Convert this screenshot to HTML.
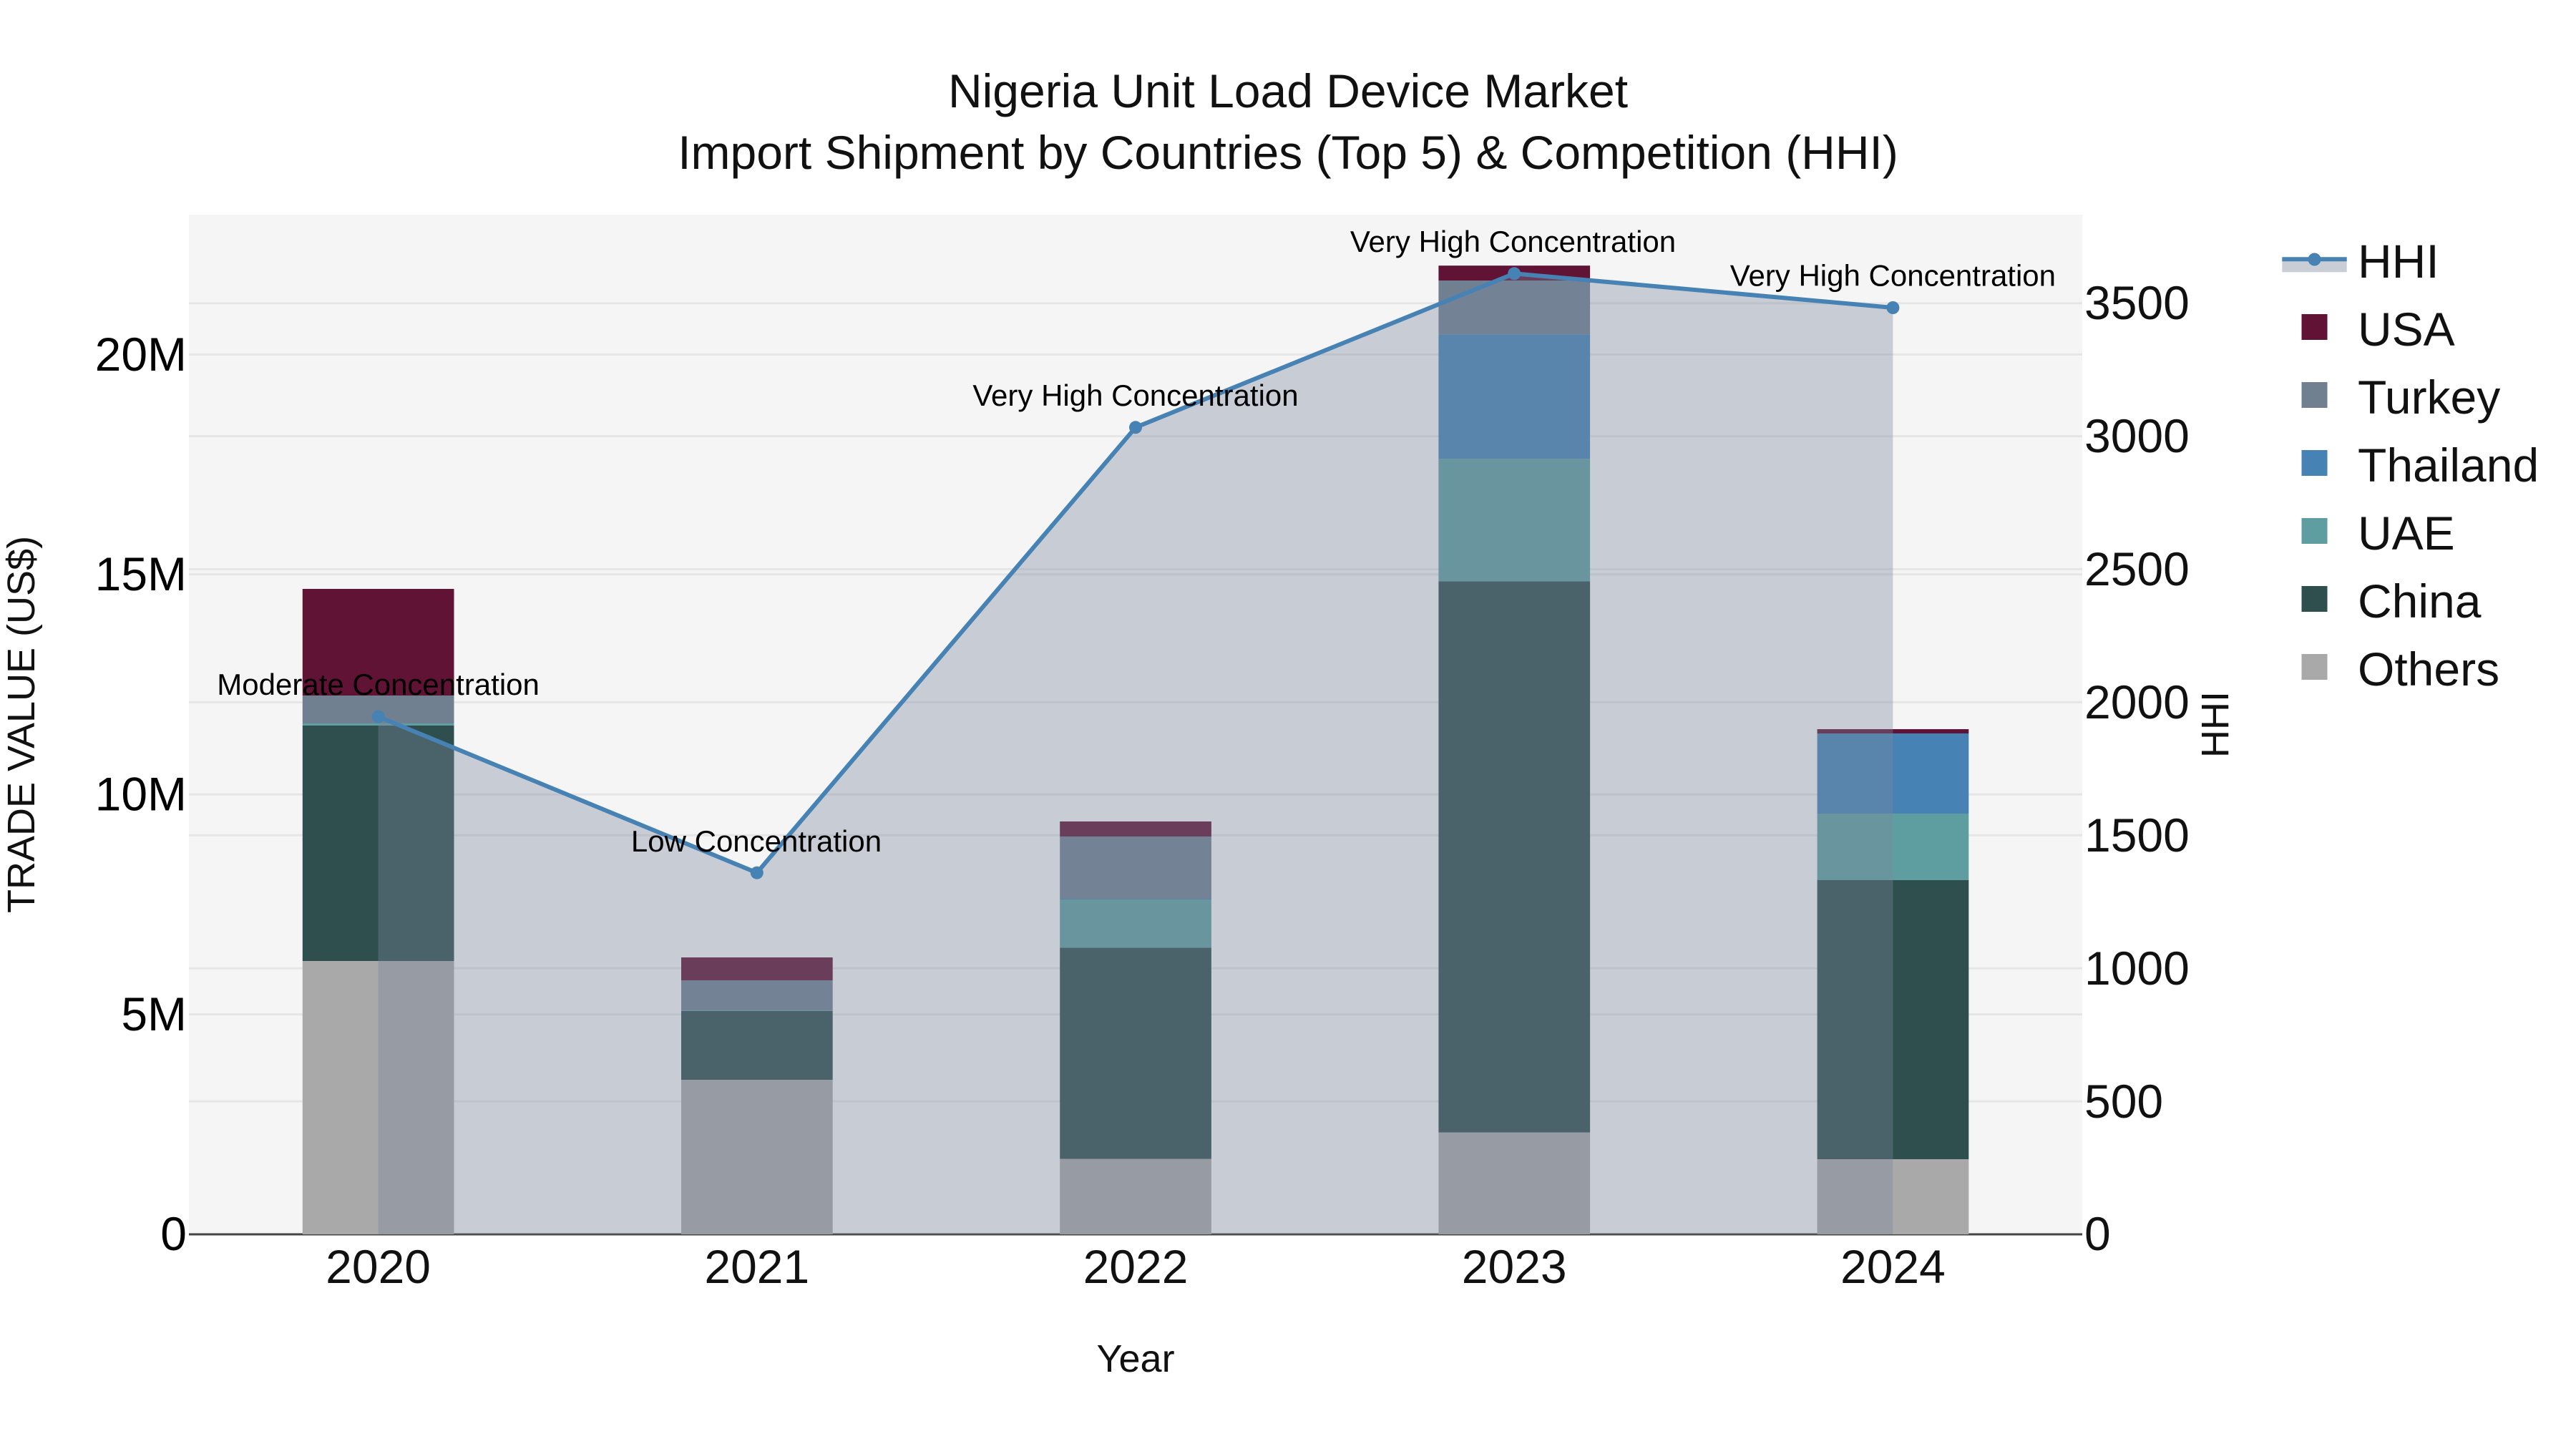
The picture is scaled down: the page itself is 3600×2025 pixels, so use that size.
<!DOCTYPE html>
<html><head><meta charset="utf-8"><title>Nigeria Unit Load Device Market</title>
<style>html,body{margin:0;padding:0;background:#fff}svg{display:block}text{font-family:"Liberation Sans",Arial,sans-serif;fill:#111}</style>
</head><body>
<svg xmlns="http://www.w3.org/2000/svg" width="3600" height="2025" viewBox="0 0 3600 2025">
<rect width="3600" height="2025" fill="#fff"/>
<rect x="264" y="300" width="2646" height="1425" fill="#f5f5f5"/>
<g stroke="#e6e6e6" stroke-width="3">
<path d="M264 1417.6H2910M264 1110.2H2910M264 802.8H2910M264 495.4H2910"/>
<path d="M264 1539.1H2910M264 1353.2H2910M264 1167.3H2910M264 981.4H2910M264 795.5H2910M264 609.6H2910M264 423.7H2910"/>
</g>
<path d="M264 1725H2910" stroke="#444" stroke-width="3"/>
<g>
<rect x="422.8" y="1343" width="211.7" height="382" fill="#a9a9a9"/>
<rect x="422.8" y="1014" width="211.7" height="329" fill="#2f4f4f"/>
<rect x="422.8" y="1011" width="211.7" height="3" fill="#5f9ea0"/>
<rect x="422.8" y="972" width="211.7" height="39" fill="#708090"/>
<rect x="422.8" y="823" width="211.7" height="149" fill="#611335"/>

<rect x="952" y="1509" width="211.7" height="216" fill="#a9a9a9"/>
<rect x="952" y="1413" width="211.7" height="96" fill="#2f4f4f"/>
<rect x="952" y="1412" width="211.7" height="1" fill="#5f9ea0"/>
<rect x="952" y="1370" width="211.7" height="42" fill="#708090"/>
<rect x="952" y="1338" width="211.7" height="32" fill="#611335"/>

<rect x="1481.2" y="1619.5" width="211.7" height="105.5" fill="#a9a9a9"/>
<rect x="1481.2" y="1324.3" width="211.7" height="295.2" fill="#2f4f4f"/>
<rect x="1481.2" y="1257" width="211.7" height="67.3" fill="#5f9ea0"/>
<rect x="1481.2" y="1256" width="211.7" height="1" fill="#4682b4"/>
<rect x="1481.2" y="1169" width="211.7" height="87" fill="#708090"/>
<rect x="1481.2" y="1148" width="211.7" height="21" fill="#611335"/>

<rect x="2010.4" y="1582.6" width="211.7" height="142.4" fill="#a9a9a9"/>
<rect x="2010.4" y="812.3" width="211.7" height="770.3" fill="#2f4f4f"/>
<rect x="2010.4" y="641.2" width="211.7" height="171.1" fill="#5f9ea0"/>
<rect x="2010.4" y="467.4" width="211.7" height="173.8" fill="#4682b4"/>
<rect x="2010.4" y="392" width="211.7" height="75.4" fill="#708090"/>
<rect x="2010.4" y="371.2" width="211.7" height="20.8" fill="#611335"/>

<rect x="2539.6" y="1620" width="211.7" height="105" fill="#a9a9a9"/>
<rect x="2539.6" y="1230" width="211.7" height="390" fill="#2f4f4f"/>
<rect x="2539.6" y="1137" width="211.7" height="93" fill="#5f9ea0"/>
<rect x="2539.6" y="1025" width="211.7" height="112" fill="#4682b4"/>
<rect x="2539.6" y="1019" width="211.7" height="6" fill="#611335"/>
</g>
<path d="M528.6 1725V1001.5L1057.8 1219.7L1587 597.3L2116.2 382.3L2645.4 430V1725Z" fill="rgb(122,135,156)" fill-opacity=".37"/>
<path d="M528.6 1001.5L1057.8 1219.7L1587 597.3L2116.2 382.3L2645.4 430" fill="none" stroke="#4682b4" stroke-width="6" stroke-linejoin="round"/>
<g fill="#4682b4">
<circle cx="528.6" cy="1001.5" r="9"/><circle cx="1057.8" cy="1219.7" r="9"/><circle cx="1587" cy="597.3" r="9"/><circle cx="2116.2" cy="382.3" r="9"/><circle cx="2645.4" cy="430" r="9"/>
</g>
<g font-size="42" text-anchor="middle">
<text x="528.6" y="971" style="fill:#000">Moderate Concentration</text>
<text x="1057" y="1190" style="fill:#000">Low Concentration</text>
<text x="1587" y="567" style="fill:#000">Very High Concentration</text>
<text x="2114.5" y="352" style="fill:#000">Very High Concentration</text>
<text x="2645.4" y="399.5" style="fill:#000">Very High Concentration</text>
</g>
<g font-size="66" text-anchor="middle">
<text x="1800" y="150">Nigeria Unit Load Device Market</text>
<text x="1800" y="235.8">Import Shipment by Countries (Top 5) &amp; Competition (HHI)</text>
</g>
<g font-size="66" text-anchor="end">
<text x="261" y="518" style="fill:#000">20M</text>
<text x="261" y="825" style="fill:#000">15M</text>
<text x="261" y="1132.5" style="fill:#000">10M</text>
<text x="261" y="1440" style="fill:#000">5M</text>
<text x="261" y="1747" style="fill:#000">0</text>
</g>
<g font-size="66">
<text x="2913" y="446">3500</text>
<text x="2913" y="632">3000</text>
<text x="2913" y="818">2500</text>
<text x="2913" y="1004">2000</text>
<text x="2913" y="1190">1500</text>
<text x="2913" y="1376">1000</text>
<text x="2913" y="1562">500</text>
<text x="2913" y="1747">0</text>
</g>
<g font-size="66" text-anchor="middle">
<text x="528.6" y="1793">2020</text>
<text x="1057.8" y="1793">2021</text>
<text x="1587" y="1793">2022</text>
<text x="2116.2" y="1793">2023</text>
<text x="2645.4" y="1793">2024</text>
</g>
<text font-size="54" text-anchor="middle" x="1587" y="1917">Year</text>
<text font-size="54" text-anchor="middle" transform="translate(48 1012.5) rotate(-90)">TRADE VALUE (US$)</text>
<text font-size="54" text-anchor="middle" transform="translate(3114 1012.5) rotate(-90)">HHI</text>
<rect x="3189.3" y="362" width="90.4" height="18.3" fill="#c9ced6"/>
<path d="M3189.3 362.3H3279.7" stroke="#4682b4" stroke-width="6"/>
<circle cx="3234.5" cy="362.5" r="9" fill="#4682b4"/>
<rect x="3216.5" y="439" width="36" height="36" fill="#611335"/>
<rect x="3216.5" y="534" width="36" height="36" fill="#708090"/>
<rect x="3216.5" y="629" width="36" height="36" fill="#4682b4"/>
<rect x="3216.5" y="724" width="36" height="36" fill="#5f9ea0"/>
<rect x="3216.5" y="819" width="36" height="36" fill="#2f4f4f"/>
<rect x="3216.5" y="914" width="36" height="36" fill="#a9a9a9"/>
<g font-size="66">
<text x="3295" y="388">HHI</text>
<text x="3295" y="483">USA</text>
<text x="3295" y="578">Turkey</text>
<text x="3295" y="673">Thailand</text>
<text x="3295" y="768">UAE</text>
<text x="3295" y="863">China</text>
<text x="3295" y="958">Others</text>
</g>
</svg>
</body></html>
